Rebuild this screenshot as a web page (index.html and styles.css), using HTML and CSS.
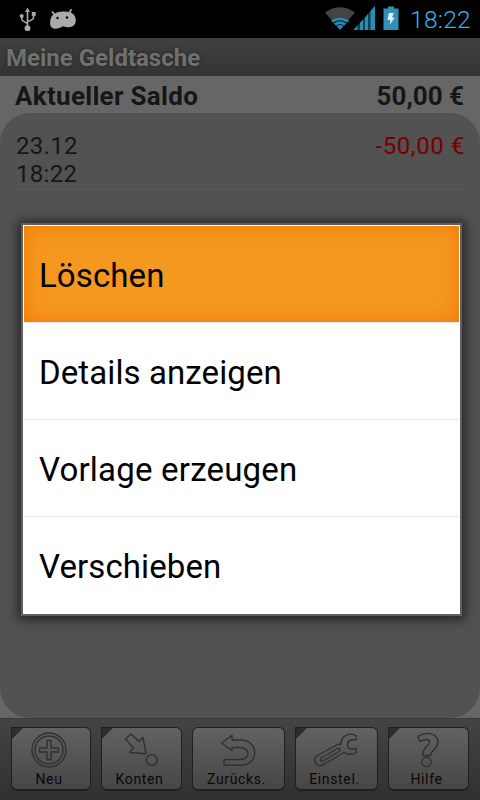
FILE: index.html
```html
<!DOCTYPE html>
<html lang="de">
<head>
<meta charset="utf-8">
<title>Meine Geldtasche</title>
<link rel="stylesheet" href="styles.css">
</head>
<body>
<div class="screen">
  <header class="status">
    <svg class="status-left" width="90" height="38" viewBox="0 0 90 38">
      <g fill="none" stroke="#aaa" stroke-width="1.600">
        <path d="M27.500 10V27M21.700 17V19Q22 21 27.500 23.500M33.500 15V18Q33.500 19.500 27.500 21.500"/>
      </g>
      <g fill="#aaa"><path d="M27.500 7.500L30 12H25Z"/><circle cx="27.500" cy="28.200" r="2.900"/><circle cx="21.700" cy="16" r="2"/><rect x="31.800" y="12" width="3.900" height="3.900"/></g>
      <path d="M52.500 12L55.500 16M71 9.800L69 14" stroke="#aaa" stroke-width="1.800" stroke-linecap="round"/>
      <path d="M50.200 24C49.500 15.500 55 11.500 63 11.500C71 11 75.800 14.500 75.800 20C75.800 25 73 27.300 68 27.300C64 27.300 63.500 26 61.500 27C57 29.800 50.500 29.500 50.200 24Z" fill="#aaa"/>
      <circle cx="57.500" cy="18" r="1.200" fill="#000"/><circle cx="67" cy="17.500" r="1.200" fill="#000"/>
    </svg>
    <div class="status-right">
      <svg width="85" height="38" viewBox="320 0 85 38">
        <path d="M325 12.500Q340 2 355 12.500L340 29.500Z" fill="#444"/>
        <path d="M331 20.500Q340 15 349 20.500L340 29.800Z" fill="#288db5"/>
        <path d="M333.500 23Q340 18.500 346.500 23M336.500 26Q340 23 343.500 26" fill="none" stroke="#07151c" stroke-width="1.200"/>
        <path d="M353.500 30L375 6V30Z" fill="#153e50"/>
        <path d="M353.500 30L357.500 25.500V30ZM360 30V23L363 19.500V30ZM365 30V17.500L368 14V30ZM370.500 30V11L375 6V30Z" fill="#288db5"/>
        <path d="M383.500 8.500H388V6.500H394V8.500H398.500V30H383.500Z" fill="#338fb5"/>
        <path d="M388.800 13H393.800L392 17.500H394.800L389.500 25L390.500 20H387.500Z" fill="#e5f0f3"/>
      </svg>
      <span class="clock">18:22</span>
    </div>
  </header>
  <h1 class="title">Meine Geldtasche</h1>
  <main class="content">
    <div class="balance"><span class="label">Aktueller Saldo</span><span>50,00 €</span></div>
    <section class="list">
      <div class="entry"><div class="date">23.12<br>18:22</div><div class="amount">-50,00 €</div></div>
    </section>
  </main>
  <nav class="toolbar">
    <button class="tool cut">
      <svg width="40" height="40" viewBox="0 0 40 40"><circle cx="20" cy="20" r="17"/><circle cx="20" cy="20" r="14"/><path d="M18 10.500H22V18H29.500V22H22V29.500H18V22H10.500V18H18Z"/></svg>
      <span>Neu</span>
    </button>
    <button class="tool cut">
      <svg width="40" height="40" viewBox="119.500 730 40 40"><path d="M125 739L130.500 734L138.500 741.500L142.500 737.500L145.500 753.800L129 752.500L133 748Z"/><circle cx="151.200" cy="760" r="5.400"/></svg>
      <span>Konten</span>
    </button>
    <button class="tool">
      <svg width="40" height="40" viewBox="216.500 730 40 40"><path d="M221 743L231.500 735.500V740H240C259 740 259 765.300 240 765.300H223.500V759.500H240C250 759.500 250 747.500 240 747.500H231.500V750.500Z"/></svg>
      <span>Zurücks.</span>
    </button>
    <button class="tool cut">
      <svg width="44" height="40" viewBox="312.500 730 44 40"><path d="M340.500 744C340 736 349 731.500 356 736V739.500L350 740Q347 741 347 744.500Q347 749 350.500 749H356V752.500C352 755 346 754.500 343.500 752.500L323 764.500Q316 768 314 760.500Q313.500 757.500 317 755.500L337 744.500Z"/><path d="M320.500 758L337 748.500Q340 748 339.500 751L322.500 761Q319 761.500 320.500 758Z"/></svg>
      <span>Einstel.</span>
    </button>
    <button class="tool cut">
      <svg width="40" height="40" viewBox="406.500 730 40 40"><path d="M417.500 736.500C425 731 437.500 733 437.500 742C437.500 749 430 750 430 755.500H422.500C421.500 747 429 746 429 742C429 738.500 424 739 419.500 741.500Z"/><circle cx="426" cy="762" r="4.700"/></svg>
      <span>Hilfe</span>
    </button>
  </nav>
  <div class="dialog" role="menu">
    <div class="option selected">Löschen</div>
    <div class="option">Details anzeigen</div>
    <div class="option wide">Vorlage erzeugen</div>
    <div class="option">Verschieben</div>
  </div>
</div>
</body>
</html>
```
FILE: styles.css
```css
* { box-sizing: border-box; }
body { margin: 0; font-family: Roboto, sans-serif; }
.screen { position: relative; width: 480px; height: 800px; overflow: hidden; display: flex; flex-direction: column; background: #666; }
.status { height: 38px; background: #000; display: flex; justify-content: space-between; flex: none; }
.status svg { display: block; flex: none; }
.status-right { display: flex; width: 160px; gap: 5px; }
.clock { color: #33b5e5; font-size: 24.5px; line-height: 40px; letter-spacing: 0.3px; font-weight: 300; white-space: nowrap; }
.title { margin: 0; height: 38px; flex: none; padding-left: 6px; font-size: 24px; line-height: 40px; font-weight: 700; color: #707070; background: linear-gradient(#404040, #333); text-shadow: 0 0 3px #222; white-space: nowrap; }
.content { flex: 1; display: flex; flex-direction: column; }
.balance { height: 37px; flex: none; padding: 0 16px 0 15px; display: flex; justify-content: space-between; font-size: 26px; line-height: 40px; font-weight: 700; color: #161616; white-space: nowrap; }
.label { letter-spacing: 0.3px; }
.list { flex: 1; background: #525252; border-radius: 30px; padding: 18px 15px; margin-bottom: 0; }
.entry { height: 59px; padding-top: 1px; display: flex; justify-content: space-between; border-bottom: 1px solid #5b5b5b; font-size: 24px; line-height: 28px; color: #161616; letter-spacing: 0.6px; }
.date { padding-left: 1px; letter-spacing: 0.3px; }
.amount { color: #780000; }
.toolbar { height: 82px; flex: none; display: grid; grid-template-columns: 80px 81px 93px 83px 81px; gap: 10px; padding: 8px 11px 10px; background: linear-gradient(#444, #303030); border-top: 1px solid #393939; }
.tool { position: relative; height: 64px; border: 1px solid #202020; border-bottom-width: 2px; border-radius: 6px; padding: 2px 4px 0 0; display: flex; flex-direction: column; align-items: center; justify-content: flex-start; background: linear-gradient(#626262, #464646); color: #080808; font: 14px/18px Roboto, sans-serif; letter-spacing: 0.65px; }
.tool.cut { border-top-left-radius: 0; }
.tool.cut::before { content: ""; position: absolute; left: 0; top: 0; border-top: 11px solid #2d2d2d; border-right: 11px solid transparent; }
.tool svg { fill: none; stroke: #303030; stroke-width: 1.4; stroke-linejoin: round; flex: none; }
.dialog { position: absolute; left: 21px; top: 223px; width: 441px; height: 393px; padding: 1px; border: 2px solid #606060; background: #fff; box-shadow: 0 1px 10px 3px #252525; }
.option { height: 97px; padding-left: 15px; line-height: 99px; font-size: 33px; letter-spacing: 0.1px; color: #000; border-bottom: 1px solid #e5e5e5; white-space: nowrap; }
.option:last-child { border-bottom: 0; }
.option.wide { letter-spacing: 0.2px; }
.selected { background: #f59820; background-clip: padding-box; box-shadow: inset 0 0 20px #f27806; }
```
